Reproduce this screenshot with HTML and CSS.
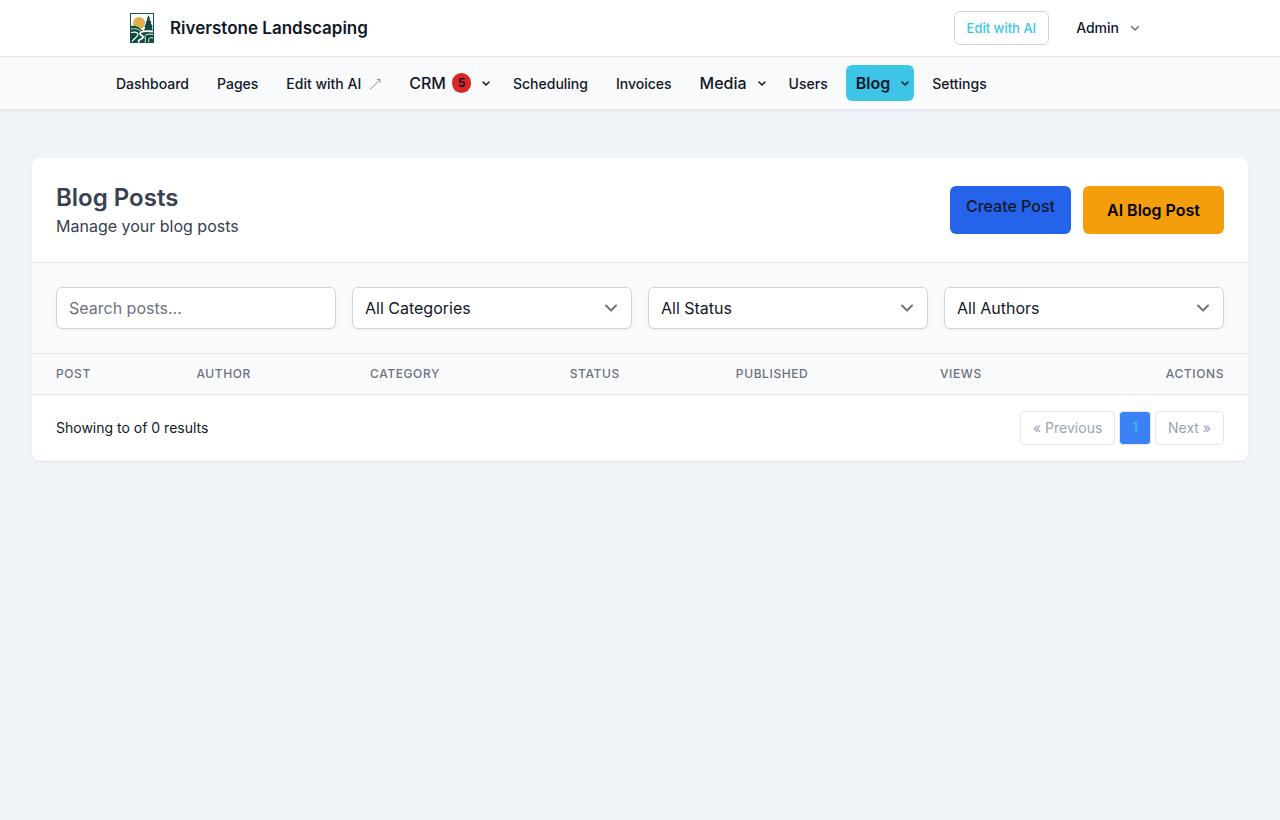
FILE: index.html
```
<!DOCTYPE html>
<html lang="en">
<head>
  <meta charset="UTF-8" />
  <meta name="viewport" content="width=device-width, initial-scale=1.0" />
  <title>Blog Posts - Riverstone Landscaping</title>
  <link rel="stylesheet" href="styles.css">
</head>
<body>
  <header class="topbar">
    <div class="topbar-inner">
      <a class="brand" href="#">
        <svg class="logo" viewBox="0 0 24 30" aria-hidden="true">
          <rect width="24" height="30" fill="#14524a"/>
          <rect x="1" y="1" width="22" height="28" fill="#fff"/>
          <circle cx="9" cy="10" r="6" fill="#e0b04c"/>
          <path d="M18.500 2l1.500 4h-.5l2 4h-.7l2 4h-1l1.200 4h-3.500v2h-2v-2h-3.500l1.200-4h-1l2-4h-.7l2-4h-.5z" fill="#0f4a40"/>
          <path d="M1 13c3-1 7 0 11 4 3 2 7 1 11 0v12H1z" fill="#0f4a40"/>
          <path d="M1 16c3-1 7 0 10 2" fill="none" stroke="#fff" stroke-width=".8"/>
          <path d="M23 18.500c-7-1-13 0-13 2s4 2 3 4-6 2-4 5" fill="none" stroke="#fff" stroke-width="1.800"/>
          <path d="M1 19.500c4-1 7 0 7 2s-4 4-6 7" fill="none" stroke="#fff" stroke-width="1.200"/>
          <path d="M23 21.500c-5-1-8 0-8 2s1 3 0 6M23 25c-4-1-5 1-4 4" fill="none" stroke="#fff" stroke-width="1"/>
        </svg>
        <span>Riverstone Landscaping</span>
      </a>
      <div class="topbar-actions">
        <a class="edit-btn" href="#">Edit with AI</a>
        <button class="user-btn" type="button">
          Admin
          <svg class="chevron" viewBox="0 0 10 10" aria-hidden="true"><path d="M1.500 3.500l3.500 3.500 3.500-3.500"/></svg>
        </button>
      </div>
    </div>
  </header>

  <nav class="mainnav">
    <div class="mainnav-inner">
      <a class="nav-link" href="#">Dashboard</a>
      <a class="nav-link" href="#">Pages</a>
      <a class="nav-link" href="#">Edit with AI
        <svg class="external" viewBox="0 0 12 12" aria-hidden="true"><path d="M1 11.500L11 1.500M8 1.500h3v3"/></svg>
      </a>
      <button class="nav-drop" type="button">CRM <span class="badge">5</span>
        <svg class="chevron" viewBox="0 0 10 10" aria-hidden="true"><path d="M2 4l3 3 3-3"/></svg>
      </button>
      <a class="nav-link" href="#">Scheduling</a>
      <a class="nav-link" href="#">Invoices</a>
      <button class="nav-drop" type="button">Media
        <svg class="chevron" viewBox="0 0 10 10" aria-hidden="true"><path d="M2 4l3 3 3-3"/></svg>
      </button>
      <a class="nav-link" href="#">Users</a>
      <button class="nav-drop active" type="button">Blog
        <svg class="chevron" viewBox="0 0 10 10" aria-hidden="true"><path d="M2 4l3 3 3-3"/></svg>
      </button>
      <a class="nav-link" href="#">Settings</a>
    </div>
  </nav>

  <main class="content">
    <section class="card">
      <div class="card-header">
        <div>
          <h1>Blog Posts</h1>
          <p>Manage your blog posts</p>
        </div>
        <div class="card-actions">
          <a class="btn btn-primary" href="#">Create Post</a>
          <button class="btn btn-ai" type="button">AI Blog Post</button>
        </div>
      </div>

      <form class="filters">
        <input class="field" type="text" placeholder="Search posts..." aria-label="Search posts">
        <div class="select-wrap">
          <select class="field" aria-label="Category"><option>All Categories</option></select>
          <svg class="select-arrow" viewBox="0 0 20 20" aria-hidden="true"><path d="M5 7.500l5 5 5-5"/></svg>
        </div>
        <div class="select-wrap">
          <select class="field" aria-label="Status"><option>All Status</option></select>
          <svg class="select-arrow" viewBox="0 0 20 20" aria-hidden="true"><path d="M5 7.500l5 5 5-5"/></svg>
        </div>
        <div class="select-wrap">
          <select class="field" aria-label="Author"><option>All Authors</option></select>
          <svg class="select-arrow" viewBox="0 0 20 20" aria-hidden="true"><path d="M5 7.500l5 5 5-5"/></svg>
        </div>
      </form>

      <table class="posts">
        <thead>
          <tr>
            <th>Post</th>
            <th>Author</th>
            <th>Category</th>
            <th>Status</th>
            <th>Published</th>
            <th>Views</th>
            <th class="right">Actions</th>
          </tr>
        </thead>
        <tbody></tbody>
      </table>

      <div class="card-footer">
        <div>Showing to of 0 results</div>
        <div class="pagination">
          <button type="button" disabled>« Previous</button>
          <a class="current" href="#">1</a>
          <button type="button" disabled>Next »</button>
        </div>
      </div>
    </section>
  </main>
</body>
</html>
```
FILE: styles.css
```
* {
  box-sizing: border-box;
}

body {
  margin: 0;
  font-family: Inter, "Liberation Sans", sans-serif;
  font-size: 16px;
  line-height: 24px;
  color: #111827;
  background: #f0f3f8;
}

a {
  color: inherit;
  text-decoration: none;
}

button {
  font: inherit;
  color: inherit;
  background: none;
  border: 0;
  cursor: pointer;
}

svg {
  flex-shrink: 0;
}

.topbar {
  background: #fff;
  border-bottom: 1px solid #e5e7eb;
}

.topbar-inner,
.mainnav-inner {
  display: flex;
  align-items: center;
  max-width: 1068px;
  margin: 0 auto;
}

.topbar-inner {
  justify-content: space-between;
  height: 56px;
  padding: 0 24px;
}

.brand {
  display: flex;
  align-items: center;
  gap: 16px;
  font-size: 17px;
  font-weight: 600;
}

.logo {
  width: 24px;
  height: 30px;
}

.topbar-actions {
  display: flex;
  align-items: center;
  gap: 17px;
}

.edit-btn {
  padding: 4px 12px;
  border: 1px solid #d1d5db;
  border-radius: 6px;
  font-size: 13px;
  font-weight: 500;
  color: #3dc5e8;
}

.user-btn {
  display: flex;
  align-items: center;
  gap: 11px;
  padding: 4px 10px;
  font-size: 14px;
  font-weight: 500;
}

.chevron {
  width: 10px;
  height: 10px;
  fill: none;
  stroke: currentColor;
  stroke-width: 1.5;
  stroke-linecap: round;
  stroke-linejoin: round;
}

.user-btn .chevron {
  color: #6b7280;
}

.mainnav {
  background: #f9fafc;
  border-bottom: 1px solid #e5e7eb;
  box-shadow: 0 1px 2px rgba(0, 0, 0, 0.06);
}

.mainnav-inner {
  gap: 8px;
  padding: 8px 0;
}

.nav-link,
.nav-drop {
  display: flex;
  align-items: center;
  height: 36px;
  border-radius: 6px;
  font-weight: 500;
  white-space: nowrap;
}

.nav-link {
  gap: 8px;
  padding: 2px 10px 0;
  font-size: 14px;
}

.nav-drop {
  padding: 0 4px 0 10px;
}

.nav-drop .chevron {
  margin-left: 10px;
}

.nav-drop.active {
  background: #3dc5e8;
  font-weight: 600;
}

.external {
  width: 12px;
  height: 12px;
  fill: none;
  stroke: #8b919c;
  stroke-width: 1;
}

.badge {
  width: 19px;
  height: 20px;
  margin-left: 6px;
  border-radius: 10px;
  background: #dc2626;
  font-size: 12px;
  font-weight: 700;
  line-height: 20px;
  text-align: center;
}

.content {
  padding: 48px 32px;
}

.card {
  overflow: hidden;
  background: #fff;
  border-radius: 8px;
  box-shadow: 0 1px 2px rgba(0, 0, 0, 0.06);
}

.card-header {
  display: flex;
  align-items: center;
  justify-content: space-between;
  padding: 24px;
  color: #374151;
}

.card-header h1 {
  margin: 0;
  font-size: 24px;
  font-weight: 600;
  line-height: 32px;
}

.card-header p {
  margin: 0;
}

.card-actions {
  display: flex;
  gap: 12px;
}

.btn {
  border-radius: 6px;
}

.btn-primary {
  padding: 8px 16px;
  background: #2563eb;
  color: #111827;
  font-weight: 500;
}

.btn-ai {
  padding: 12px 24px;
  background: #f59e0b;
  color: #000;
  font-weight: 600;
}

.filters {
  display: grid;
  grid-template-columns: repeat(4, 1fr);
  gap: 16px;
  padding: 24px;
  background: #f9fafc;
  border-top: 1px solid #e5e7eb;
  border-bottom: 1px solid #e5e7eb;
}

.field {
  display: block;
  width: 100%;
  height: 42px;
  padding: 8px 12px;
  appearance: none;
  background: #fff;
  border: 1px solid #d1d5db;
  border-radius: 6px;
  box-shadow: 0 1px 2px rgba(0, 0, 0, 0.05);
  color: #111827;
  font: inherit;
}

.field::placeholder {
  color: #6b7280;
}

.select-wrap {
  position: relative;
}

.select-arrow {
  position: absolute;
  top: 11px;
  right: 11px;
  width: 20px;
  height: 20px;
  fill: none;
  stroke: #6b7280;
  stroke-width: 2;
  stroke-linecap: round;
  stroke-linejoin: round;
  pointer-events: none;
}

.posts {
  width: 100%;
  border-collapse: collapse;
}

.posts thead {
  background: #f9fafc;
}

.posts tr {
  box-shadow: inset 0 -1px #e5e7eb;
}

.posts th {
  padding: 12px 24px 13px;
  color: #6b7280;
  font-size: 12px;
  font-weight: 500;
  line-height: 16px;
  letter-spacing: 0.05em;
  text-align: left;
  text-transform: uppercase;
}

.posts .right {
  text-align: right;
}

.card-footer {
  display: flex;
  align-items: center;
  justify-content: space-between;
  padding: 16px 24px;
  font-size: 14px;
}

.pagination {
  display: flex;
  gap: 4px;
}

.pagination a,
.pagination button {
  padding: 4px 12px;
  border: 1px solid #e5e7eb;
  border-radius: 4px;
  color: #9ca3af;
}

.pagination .current {
  background: #3b82f6;
  color: #3dc5e8;
}
```
